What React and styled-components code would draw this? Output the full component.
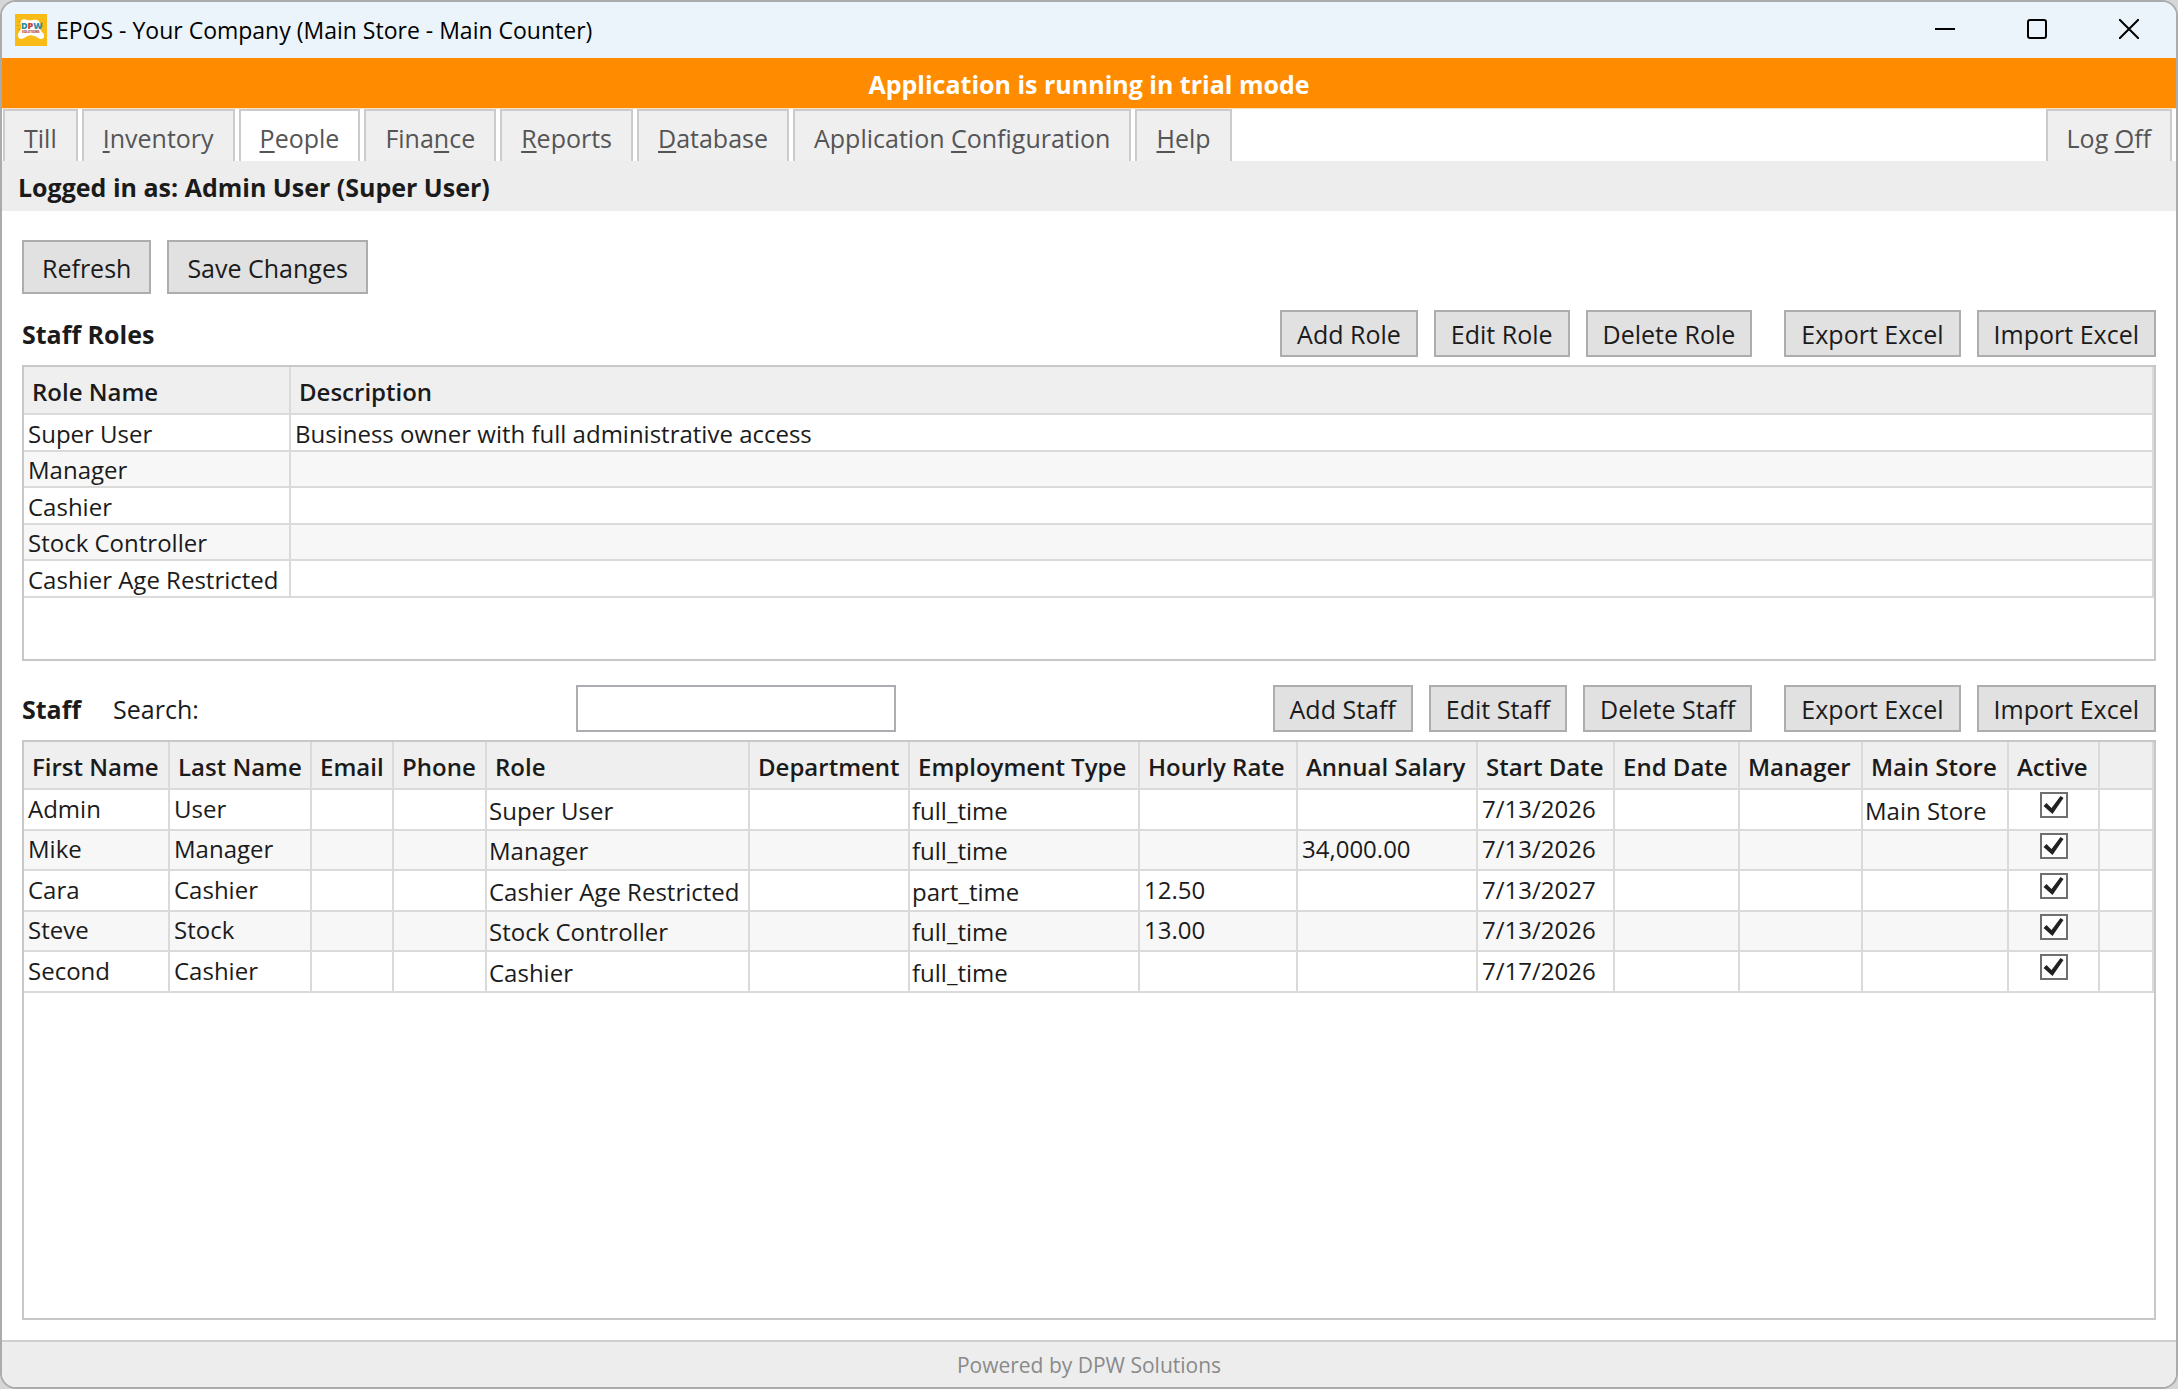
import React from 'react';
import styled, { createGlobalStyle, css } from 'styled-components';

const colors = {
  text: '#1b1b1b',
  tabText: '#555555',
  muted: '#8a8a8a',
  titleBar: '#ebf4fa',
  orange: '#ff8c00',
  bar: '#ededed',
  header: '#efefef',
  stripe: '#f7f7f7',
  button: '#e1e1e1',
  buttonBorder: '#adadad',
  gridBorder: '#c8c8c8',
  gridLine: '#dadada',
  white: '#ffffff',
};

const fontSizes = {
  status: '21px',
  title: '23px',
  grid: '24px',
  base: '25px',
};

const GlobalStyle = createGlobalStyle`
  *, *::before, *::after {
    box-sizing: border-box;
  }

  body {
    margin: 0;
    background: #d6d6d6;
    color: ${colors.text};
    font-family: 'Open Sans', 'Noto Sans', sans-serif;
    font-size: ${fontSizes.base};
    line-height: 32px;
  }

  button, input {
    font: inherit;
    color: inherit;
  }
`;

const Window = styled.div`
  display: flex;
  flex-direction: column;
  min-height: 100vh;
  overflow: hidden;
  background: ${colors.white};
  border: 2px solid #ababab;
  border-radius: 16px;
`;

const TitleBar = styled.header`
  display: flex;
  align-items: center;
  height: 56px;
  padding: 0 1px 0 13px;
  background: ${colors.titleBar};
  color: #000000;
`;

const WindowTitle = styled.h1`
  flex: 1;
  margin: 0 0 0 9px;
  font-size: ${fontSizes.title};
  font-weight: 400;
`;

const CaptionButton = styled.button`
  display: flex;
  align-items: center;
  justify-content: center;
  width: 92px;
  height: 56px;
  padding: 0 0 2px;
  border: none;
  background: transparent;

  svg {
    fill: none;
    stroke: #000000;
    stroke-width: 2;
  }
`;

const TrialBanner = styled.div`
  height: 50px;
  line-height: 52px;
  text-align: center;
  font-weight: 700;
  color: ${colors.white};
  background: ${colors.orange};
`;

const TabStrip = styled.nav`
  display: flex;
  gap: 4px;
  padding: 0 4px 0 1px;
  border-top: 1px solid #ffe2bd;
`;

const Tab = styled.button`
  height: 52px;
  padding: 3px 19px 0;
  border: 2px solid #cbcbcb;
  border-bottom: none;
  background: ${props => (props.$active ? colors.white : colors.header)};
  color: ${colors.tabText};
  white-space: nowrap;

  &:last-child {
    margin-left: auto;
  }

  u {
    text-decoration-thickness: 2px;
    text-underline-offset: 3px;
  }
`;

const LoginBar = styled.div`
  height: 50px;
  padding-left: 16px;
  line-height: 52px;
  font-weight: 700;
  background: ${colors.bar};
`;

const Content = styled.main`
  display: flex;
  flex: 1;
  flex-direction: column;
  padding: 29px 20px 20px;
`;

const Toolbar = styled.div`
  display: flex;
  gap: 16px;
  margin-bottom: 16px;
`;

const Button = styled.button`
  height: ${props => (props.$large ? '54px' : '47px')};
  padding: ${props => (props.$large ? '2px 18px 0' : '1px 15px 0')};
  border: 2px solid ${colors.buttonBorder};
  background: ${colors.button};
  white-space: nowrap;

  &:hover {
    background: #e5f1fb;
  }
`;

const SectionBar = styled.div`
  display: flex;
  align-items: center;
  margin-bottom: 8px;
`;

const SectionTitle = styled.h2`
  margin: 0;
  padding-top: 1px;
  font-size: ${fontSizes.base};
  font-weight: 700;
`;

const Actions = styled.div`
  display: flex;
  gap: 16px;
  margin-left: ${props => (props.$apart ? '32px' : 'auto')};
`;

const SearchField = styled.div`
  display: flex;
  flex: 1;
  align-items: center;
  margin-left: 32px;
`;

const SearchLabel = styled.label`
  padding-top: 1px;
`;

const SearchInput = styled.input`
  width: 320px;
  height: 47px;
  margin: 0 auto;
  padding: 0 8px;
  border: 2px solid #abadb3;
  background: ${colors.white};
`;

const GridBox = styled.div`
  border: 2px solid ${colors.gridBorder};
  ${props =>
    props.$fill
      ? css`
          flex: 1;
        `
      : css`
          min-height: 296px;
          margin-bottom: 24px;
        `}
`;

const Table = styled.table`
  width: 100%;
  table-layout: fixed;
  border-collapse: separate;
  border-spacing: 0;
  font-size: ${fontSizes.grid};
`;

const Col = styled.col`
  width: ${props => (props.$width ? `${props.$width}px` : 'auto')};
`;

const HeaderCell = styled.th`
  height: 48px;
  padding: 3px 0 0 8px;
  border-right: 2px solid ${colors.gridLine};
  border-bottom: 2px solid ${colors.gridLine};
  background: ${colors.header};
  font-weight: 600;
  text-align: left;
  white-space: nowrap;
`;

const Cell = styled.td`
  padding: 2px 0 0 4px;
  border-right: 2px solid ${colors.gridLine};
  border-bottom: 2px solid ${colors.gridLine};
  white-space: nowrap;
`;

const Row = styled.tr`
  height: 37px;

  &:nth-child(even) {
    height: 36px;
    background: ${colors.stripe};
  }
`;

const StaffRow = styled(Row)`
  height: 41px;

  &:nth-child(even) {
    height: 40px;
  }
`;

const StaffCell = styled(Cell)`
  padding: ${props => (props.$combo ? '2px 0 0 2px' : '0 0 2px 4px')};
`;

const CheckCell = styled(Cell)`
  padding: 2px 0 0;
  vertical-align: top;
`;

const Checkbox = styled.input`
  display: block;
  appearance: none;
  width: 28px;
  height: 26px;
  margin: 0 auto;
  border: 2px solid #707070;
  background: ${colors.white};

  &:checked::before {
    content: '';
    display: block;
    width: 24px;
    height: 22px;
    background: #212121;
    clip-path: polygon(2px 12px, 5px 9px, 10px 14px, 19px 2px, 22px 4px, 11px 20px);
  }
`;

const StatusBar = styled.footer`
  height: 47px;
  border-top: 2px solid #cfcfcf;
  background: ${colors.bar};
  color: ${colors.muted};
  font-size: ${fontSizes.status};
  line-height: 46px;
  text-align: center;
`;

// [before, access key, after] - the access key is underlined
const tabs = [
  ['', 'T', 'ill'],
  ['', 'I', 'nventory'],
  ['', 'P', 'eople'],
  ['Fina', 'n', 'ce'],
  ['', 'R', 'eports'],
  ['', 'D', 'atabase'],
  ['Application ', 'C', 'onfiguration'],
  ['', 'H', 'elp'],
  ['Log ', 'O', 'ff'],
];

const roles = [
  { name: 'Super User', description: 'Business owner with full administrative access' },
  { name: 'Manager' },
  { name: 'Cashier' },
  { name: 'Stock Controller' },
  { name: 'Cashier Age Restricted' },
];

const staffColumns = [
  { key: 'firstName', label: 'First Name', width: 146 },
  { key: 'lastName', label: 'Last Name', width: 142 },
  { key: 'email', label: 'Email', width: 82 },
  { key: 'phone', label: 'Phone', width: 93 },
  { key: 'role', label: 'Role', width: 263, combo: true },
  { key: 'department', label: 'Department', width: 160, combo: true },
  { key: 'employment', label: 'Employment Type', width: 230, combo: true },
  { key: 'rate', label: 'Hourly Rate', width: 158 },
  { key: 'salary', label: 'Annual Salary', width: 180 },
  { key: 'start', label: 'Start Date', width: 137 },
  { key: 'end', label: 'End Date', width: 125 },
  { key: 'manager', label: 'Manager', width: 123, combo: true },
  { key: 'store', label: 'Main Store', width: 146, combo: true },
];

const staff = [
  { firstName: 'Admin', lastName: 'User', role: 'Super User', employment: 'full_time', start: '7/13/2026', store: 'Main Store' },
  { firstName: 'Mike', lastName: 'Manager', role: 'Manager', employment: 'full_time', salary: '34,000.00', start: '7/13/2026' },
  { firstName: 'Cara', lastName: 'Cashier', role: 'Cashier Age Restricted', employment: 'part_time', rate: '12.50', start: '7/13/2027' },
  { firstName: 'Steve', lastName: 'Stock', role: 'Stock Controller', employment: 'full_time', rate: '13.00', start: '7/13/2026' },
  { firstName: 'Second', lastName: 'Cashier', role: 'Cashier', employment: 'full_time', start: '7/17/2026' },
];

const Logo = () => (
  <svg width="32" height="32" viewBox="0 0 32 32" aria-hidden="true">
    <rect width="32" height="32" fill="#f9bb17" />
    <path
      d="M6 7c1-2 4-2 6-1 4 1 7-1 10 0 3 1 3 4 3 7 0 3 1 4 3 6 2 3 1 6-2 6-3 0-4-3-7-3-3-1-5-1-8 1-2 1-5 3-7 1-2-2-1-5 1-7 1-2 1-3 1-5 0-2-1-3 0-5z"
      fill="#ffffff"
    />
    <path d="M4 7v1M3 11v1M26 8v1M28 12v1M4 15v1" stroke="#b58a1d" />
    <text x="6" y="15" fontSize="9" fontWeight="800" fill="#2a8fa8">
      D<tspan fill="#c8453b">P</tspan>W
    </text>
    <text x="7" y="19" fontSize="3" fontWeight="800" fill="#a8423a">
      SOLUTIONS
    </text>
  </svg>
);

const SectionActions = ({ noun }) => (
  <>
    <Actions>
      <Button>Add {noun}</Button>
      <Button>Edit {noun}</Button>
      <Button>Delete {noun}</Button>
    </Actions>
    <Actions $apart>
      <Button>Export Excel</Button>
      <Button>Import Excel</Button>
    </Actions>
  </>
);

const RolesTable = () => (
  <Table>
    <colgroup>
      <Col $width={267} />
      <Col />
    </colgroup>
    <thead>
      <tr>
        <HeaderCell>Role Name</HeaderCell>
        <HeaderCell>Description</HeaderCell>
      </tr>
    </thead>
    <tbody>
      {roles.map(role => (
        <Row key={role.name}>
          <Cell>{role.name}</Cell>
          <Cell>{role.description}</Cell>
        </Row>
      ))}
    </tbody>
  </Table>
);

const StaffTable = () => (
  <Table>
    <colgroup>
      {staffColumns.map(column => (
        <Col key={column.key} $width={column.width} />
      ))}
      <Col $width={91} />
      <Col />
    </colgroup>
    <thead>
      <tr>
        {staffColumns.map(column => (
          <HeaderCell key={column.key}>{column.label}</HeaderCell>
        ))}
        <HeaderCell>Active</HeaderCell>
        <HeaderCell />
      </tr>
    </thead>
    <tbody>
      {staff.map(person => (
        <StaffRow key={person.firstName}>
          {staffColumns.map(column => (
            <StaffCell key={column.key} $combo={column.combo}>
              {person[column.key]}
            </StaffCell>
          ))}
          <CheckCell>
            <Checkbox type="checkbox" defaultChecked aria-label={`${person.firstName} active`} />
          </CheckCell>
          <StaffCell />
        </StaffRow>
      ))}
    </tbody>
  </Table>
);

const App = () => (
  <>
    <GlobalStyle />
    <Window>
      <TitleBar>
        <Logo />
        <WindowTitle>EPOS - Your Company (Main Store - Main Counter)</WindowTitle>
        <CaptionButton aria-label="Minimize">
          <svg width="20" height="20">
            <path d="M0 10h20" />
          </svg>
        </CaptionButton>
        <CaptionButton aria-label="Maximize">
          <svg width="20" height="20">
            <rect x="1" y="1" width="18" height="18" rx="2" />
          </svg>
        </CaptionButton>
        <CaptionButton aria-label="Close">
          <svg width="20" height="20">
            <path d="M0 0l20 20M20 0L0 20" />
          </svg>
        </CaptionButton>
      </TitleBar>
      <TrialBanner>Application is running in trial mode</TrialBanner>
      <TabStrip>
        {tabs.map(([before, key, after]) => (
          <Tab key={before + key + after} $active={key === 'P'}>
            {before}
            <u>{key}</u>
            {after}
          </Tab>
        ))}
      </TabStrip>
      <LoginBar>Logged in as: Admin User (Super User)</LoginBar>
      <Content>
        <Toolbar>
          <Button $large>Refresh</Button>
          <Button $large>Save Changes</Button>
        </Toolbar>
        <SectionBar>
          <SectionTitle>Staff Roles</SectionTitle>
          <SectionActions noun="Role" />
        </SectionBar>
        <GridBox>
          <RolesTable />
        </GridBox>
        <SectionBar>
          <SectionTitle>Staff</SectionTitle>
          <SearchField>
            <SearchLabel htmlFor="staff-search">Search:</SearchLabel>
            <SearchInput id="staff-search" type="text" />
          </SearchField>
          <SectionActions noun="Staff" />
        </SectionBar>
        <GridBox $fill>
          <StaffTable />
        </GridBox>
      </Content>
      <StatusBar>Powered by DPW Solutions</StatusBar>
    </Window>
  </>
);

export default App;
